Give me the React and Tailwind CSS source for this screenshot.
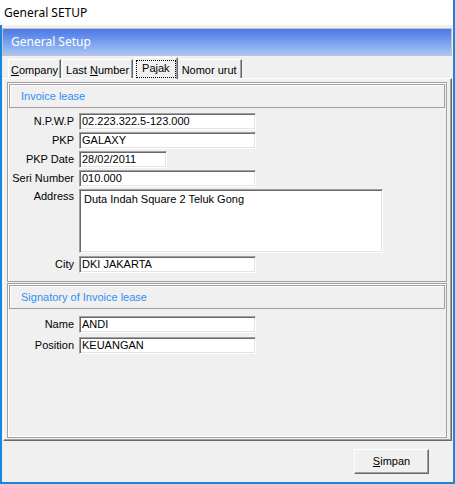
import React from "react";

function Field({ value, w = "w-[177px]", h = "h-[17px]", multi = false }) {
  return (
    <div
      className={`${w} ${h} bg-white border-t border-l border-t-[#a0a0a0] border-l-[#a0a0a0] border-b border-r border-b-white border-r-white shadow-[inset_1px_1px_0_#696969,inset_-1px_-1px_0_#e3e3e3] ${multi ? "pl-[4px] pt-[3px]" : "pl-[2px] flex items-center"} leading-[13px] whitespace-nowrap overflow-hidden`}
    >
      {value}
    </div>
  );
}

function Row({ label, children, top = false, mt = "mt-[2px]" }) {
  return (
    <div className={`flex ${top ? "items-start" : "items-center"} ${mt}`}>
      <div className={`w-[66px] text-right leading-[13px] ${top ? "pt-[1px]" : ""}`}>{label}</div>
      <div className="ml-[5px]">{children}</div>
    </div>
  );
}

function GroupHeader({ children }) {
  return (
    <div className="m-[1px] h-[24px] shrink-0 border border-[#a0a0a0] shadow-[inset_1px_1px_0_#fff] flex items-center pl-[11px] text-[#2f8ff0]">
      {children}
    </div>
  );
}

export default function App() {
  return (
    <div className="w-[455px] h-[484px] flex flex-col bg-[#f0f0f0] text-[11px] text-black font-['Liberation_Sans',Arial,sans-serif] overflow-hidden">
      <div className="h-[25px] shrink-0 bg-white border-r-2 border-r-[#1a86d9] flex items-center pl-[4px] text-[12px] font-['Noto_Sans',sans-serif]">
        General SETUP
      </div>
      <div className="flex-1 flex flex-col border-l-2 border-r-2 border-b-2 border-[#1a86d9]">
        {/* gradient header */}
        <div className="mt-[3px] mr-[1px] h-[28px] border border-[#c4c4c4] bg-gradient-to-b from-[#4977e6] to-[#aac4f3] flex items-center pl-[8px] text-white text-[12px] font-['Noto_Sans',sans-serif]">
          General Setup
        </div>
        {/* tabs */}
        <div className="flex items-end h-[22px] pl-[6px] relative z-10">
          <div className="h-[19px] px-[2px] pt-[2px] flex items-center border-l border-t border-l-white border-t-white border-r border-r-[#696969] shadow-[inset_-1px_0_0_#a0a0a0]">
            <span><span className="underline">C</span>ompany</span>
          </div>
          <div className="h-[19px] px-[3px] pt-[2px] ml-[1px] flex items-center border-l border-t border-l-white border-t-white border-r border-r-[#696969] shadow-[inset_-1px_0_0_#a0a0a0]">
            <span>Last <span className="underline">N</span>umber</span>
          </div>
          <div className="h-[22px] px-[1px] ml-[1px] mb-[-1px] bg-[#f0f0f0] flex items-center border-l border-t border-l-white border-t-white border-r border-r-[#696969] shadow-[inset_-1px_0_0_#a0a0a0]">
            <span className="border border-dotted border-black px-[5px] leading-[15px] pb-[1px]">Pajak</span>
          </div>
          <div className="h-[19px] px-[4px] pt-[2px] flex items-center border-t border-t-white border-r border-r-[#696969] shadow-[inset_-1px_0_0_#a0a0a0]">
            <span>Nomor urut</span>
          </div>
        </div>
        {/* panel */}
        <div className="ml-[1px] mr-[1px] h-[363px] border-t border-l border-t-white border-l-white border-r border-b border-r-[#696969] border-b-[#696969] shadow-[inset_-1px_-1px_0_#a0a0a0] pl-[3px] pr-[4px] pt-[3px] flex flex-col">
          {/* group 1 */}
          <div className="h-[200px] border border-[#a0a0a0] shadow-[inset_1px_1px_0_#fff] flex flex-col">
            <GroupHeader>Invoice lease</GroupHeader>
            <div className="pt-[2px]">
              <Row label="N.P.W.P"><Field value="02.223.322.5-123.000" /></Row>
              <Row label="PKP"><Field value="GALAXY" /></Row>
              <Row label="PKP Date"><Field value="28/02/2011" w="w-[88px]" /></Row>
              <Row label="Seri Number"><Field value="010.000" /></Row>
              <Row label="Address" top mt="mt-[2px]">
                <Field value="Duta Indah Square 2 Teluk Gong" w="w-[304px]" h="h-[64px]" multi />
              </Row>
              <Row label="City" mt="mt-[3px]"><Field value="DKI JAKARTA" /></Row>
            </div>
          </div>
          {/* group 2 */}
          <div className="mt-[1px] flex-1 mb-[2px] border border-[#a0a0a0] shadow-[inset_1px_1px_0_#fff,inset_0_-1px_0_#fff] flex flex-col">
            <GroupHeader>Signatory of Invoice lease</GroupHeader>
            <div className="pt-[6px]">
              <Row label="Name" mt="mt-0"><Field value="ANDI" /></Row>
              <Row label="Position" mt="mt-[4px]"><Field value="KEUANGAN" /></Row>
            </div>
          </div>
        </div>
        {/* bottom bar */}
        <div className="flex-1 flex items-start justify-end pr-[24px] pt-[8px]">
          <button className="w-[75px] h-[25px] bg-[#f0f0f0] border border-t-white border-l-white border-r-[#696969] border-b-[#696969] shadow-[inset_-1px_-1px_0_#a0a0a0] flex items-center justify-center text-[11px]">
            <span><span className="underline">S</span>impan</span>
          </button>
        </div>
      </div>
    </div>
  );
}
